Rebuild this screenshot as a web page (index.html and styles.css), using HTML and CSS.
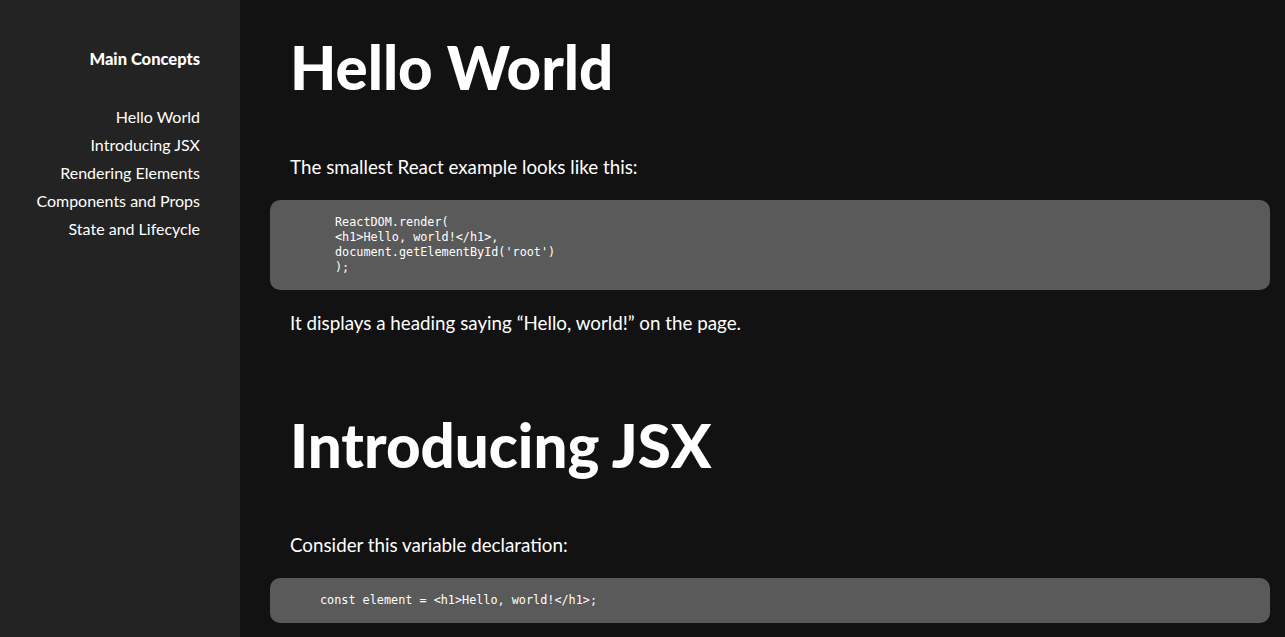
FILE: index.html
```html
<!DOCTYPE html>
<html>
<head>
<meta charset="utf-8">
<link rel="stylesheet" href="styles.css">
</head>
<body>
<div class="layout">
  <aside class="sidebar">
    <h3 class="side-title">Main Concepts</h3>
    <nav class="side-nav">
      <a>Hello World</a>
      <a>Introducing JSX</a>
      <a>Rendering Elements</a>
      <a>Components and Props</a>
      <a>State and Lifecycle</a>
    </nav>
  </aside>
  <main class="content">
    <section class="doc">
      <h1 class="doc-title">Hello World</h1>
      <p class="doc-text">The smallest React example looks like this:</p>
      <pre class="code code-indented">ReactDOM.render(
&lt;h1&gt;Hello, world!&lt;/h1&gt;,
document.getElementById('root')
);</pre>
      <p class="doc-text">It displays a heading saying “Hello, world!” on the page.</p>
    </section>
    <section class="doc">
      <h1 class="doc-title">Introducing JSX</h1>
      <p class="doc-text">Consider this variable declaration:</p>
      <pre class="code">const element = &lt;h1&gt;Hello, world!&lt;/h1&gt;;</pre>
    </section>
  </main>
</div>
</body>
</html>
```
FILE: styles.css
```css
html, body {
  margin: 0;
  padding: 0;
  height: 100%;
  background: #121212;
  overflow: hidden;
}
body {
  font-family: "Lato", "Liberation Sans", sans-serif;
  color: #ffffff;
}
.layout {
  display: flex;
  min-height: 100vh;
}
.sidebar {
  width: 240px;
  flex: none;
  background: #232323;
  box-sizing: border-box;
  padding: 48px 40px 0 0;
  text-align: right;
}
.side-title {
  margin: 0 0 37px;
  font-size: 16.5px;
  font-weight: 900;
  line-height: 22px;
}
.side-nav {
  display: flex;
  flex-direction: column;
  gap: 8px;
}
.side-nav a {
  font-size: 16px;
  line-height: 20px;
  color: #ffffff;
}
.content {
  flex: 1;
  padding: 0 15px 0 30px;
}
.doc-title {
  margin: 31px 0 52px 20px;
  font-size: 60px;
  line-height: 72px;
  font-weight: 900;
}
.doc + .doc .doc-title {
  margin-top: 74px;
}
.doc-text {
  margin: 0 0 21px 20px;
  font-size: 18.8px;
  line-height: 24px;
}
.code {
  margin: 0 0 21px;
  background: #5a5a5a;
  border-radius: 10px;
  padding: 15px 50px;
  font-family: "DejaVu Sans Mono", monospace;
  font-size: 11.8px;
  line-height: 15px;
  color: #ffffff;
}
.code-indented {
  padding-left: 65px;
}
```
